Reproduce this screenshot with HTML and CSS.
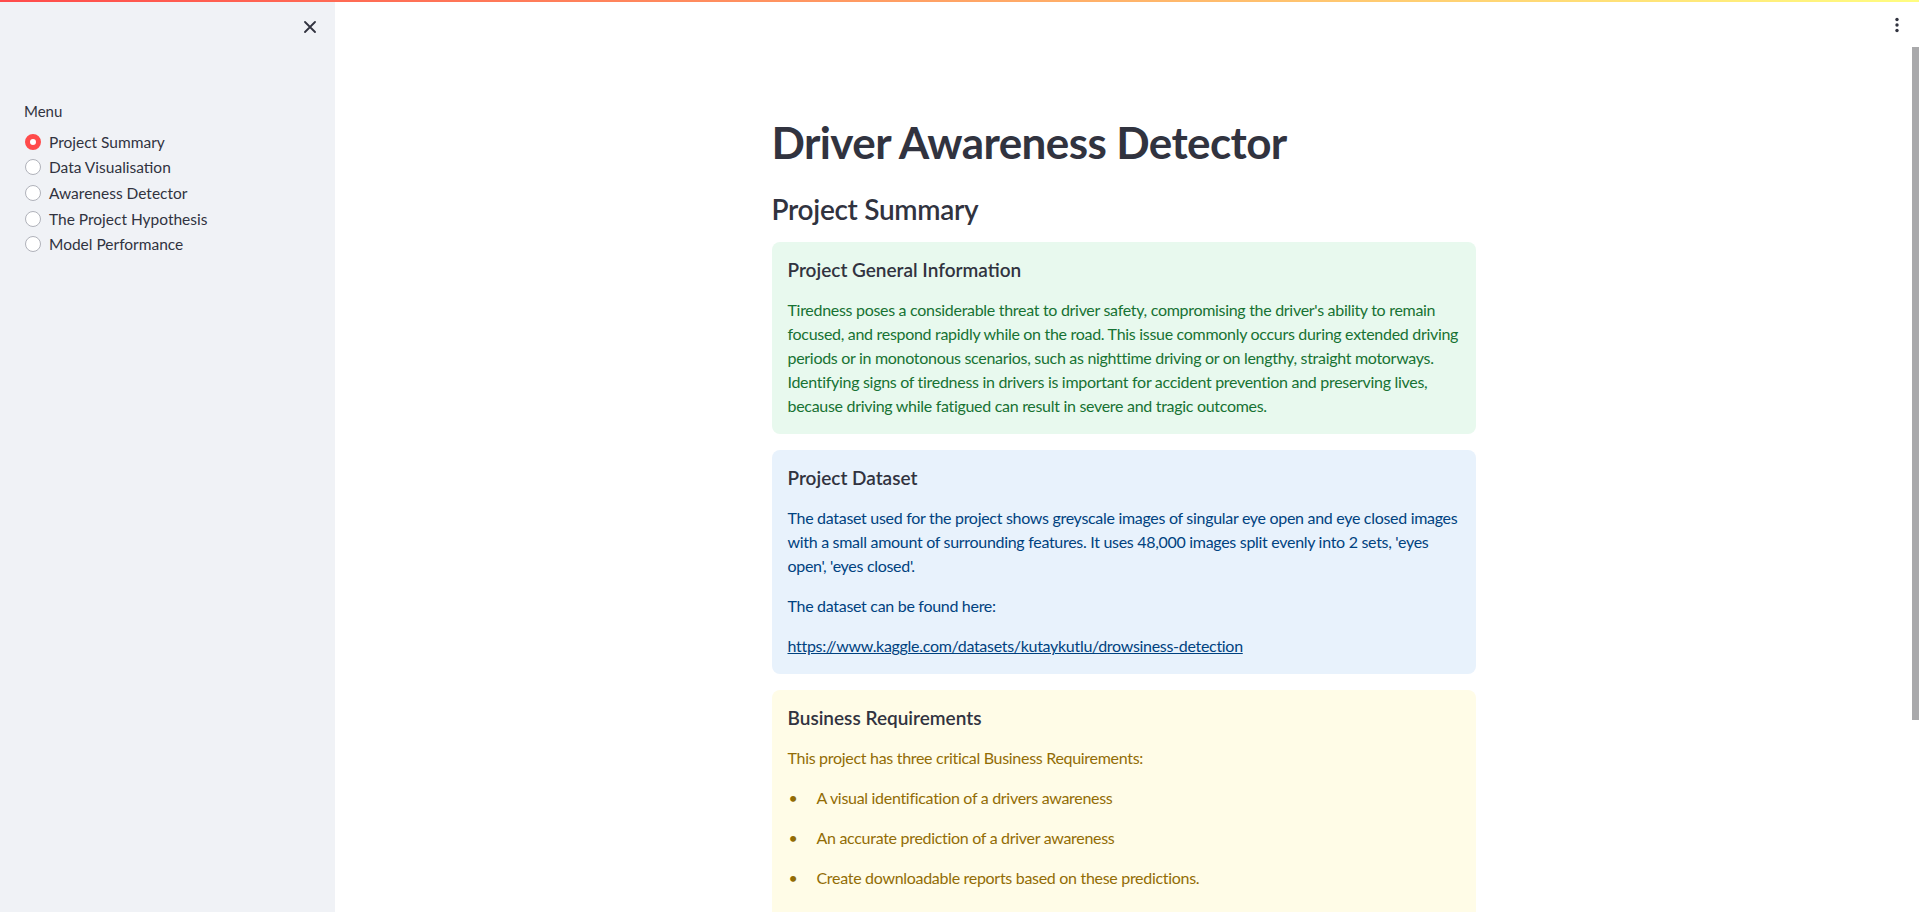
FILE: index.html
```html
<!DOCTYPE html>
<html lang="en">
<head>
<meta charset="utf-8">
<title>Driver Awareness Detector</title>
<link rel="stylesheet" href="styles.css">
</head>
<body>
<div class="decoration"></div>
<div class="app">
  <aside class="sidebar">
    <div class="sidebar-top">
      <button class="close-btn" aria-label="Close sidebar">
        <svg width="12" height="12" viewBox="0 0 12 12"><path d="M1 1 L11 11 M11 1 L1 11" stroke="#31333f" stroke-width="1.8" stroke-linecap="round" fill="none"/></svg>
      </button>
    </div>
    <div class="menu">
      <div class="menu-label">Menu</div>
      <div class="radio-group">
        <label class="radio selected"><span class="dot"></span><span class="radio-text">Project Summary</span></label>
        <label class="radio"><span class="dot"></span><span class="radio-text">Data Visualisation</span></label>
        <label class="radio"><span class="dot"></span><span class="radio-text">Awareness Detector</span></label>
        <label class="radio"><span class="dot"></span><span class="radio-text">The Project Hypothesis</span></label>
        <label class="radio"><span class="dot"></span><span class="radio-text">Model Performance</span></label>
      </div>
    </div>
  </aside>
  <main class="main">
    <div class="toolbar">
      <svg width="6" height="16" viewBox="0 0 6 16"><circle cx="3" cy="2.5" r="1.7" fill="#31333f"/><circle cx="3" cy="8" r="1.7" fill="#31333f"/><circle cx="3" cy="13.5" r="1.7" fill="#31333f"/></svg>
    </div>
    <div class="scroll-thumb"></div>
    <div class="block">
      <h1 class="title">Driver Awareness Detector</h1>
      <h3 class="subtitle">Project Summary</h3>
      <div class="alert success">
        <h4>Project General Information</h4>
        <p>Tiredness poses a considerable threat to driver safety, compromising the driver's ability to remain focused, and respond rapidly while on the road. This issue commonly occurs during extended driving periods or in monotonous scenarios, such as nighttime driving or on lengthy, straight motorways. Identifying signs of tiredness in drivers is important for accident prevention and preserving lives, because driving while fatigued can result in severe and tragic outcomes.</p>
      </div>
      <div class="alert info">
        <h4>Project Dataset</h4>
        <p>The dataset used for the project shows greyscale images of singular eye open and eye closed images with a small amount of surrounding features. It uses 48,000 images split evenly into 2 sets, 'eyes open', 'eyes closed'.</p>
        <p>The dataset can be found here:</p>
        <p><a href="#">https://www.kaggle.com/datasets/kutaykutlu/drowsiness-detection</a></p>
      </div>
      <div class="alert warning">
        <h4>Business Requirements</h4>
        <p>This project has three critical Business Requirements:</p>
        <ul>
          <li>A visual identification of a drivers awareness</li>
          <li>An accurate prediction of a driver awareness</li>
          <li>Create downloadable reports based on these predictions.</li>
        </ul>
      </div>
    </div>
  </main>
</div>
</body>
</html>
```
FILE: styles.css
```css
* { box-sizing: border-box; }
html, body {
  margin: 0;
  padding: 0;
  height: 100%;
  overflow: hidden;
  font-family: Lato, "Noto Sans", sans-serif;
  color: #31333f;
  background: #ffffff;
}
.decoration {
  position: fixed;
  top: 0;
  left: 0;
  right: 0;
  height: 2px;
  background: linear-gradient(90deg, #ff4b4b, #fffd80);
  z-index: 100;
}
.app {
  display: flex;
  height: 100vh;
}
.sidebar {
  width: 335px;
  flex: 0 0 335px;
  background: #f0f2f6;
  height: 100%;
}
.sidebar-top {
  display: flex;
  justify-content: flex-end;
  padding: 15px 13px 0 0;
}
.close-btn {
  width: 24px;
  height: 24px;
  border: none;
  background: transparent;
  padding: 0;
  display: flex;
  align-items: center;
  justify-content: center;
}
.menu {
  padding: 61px 24px 0 24px;
}
.menu-label {
  font-size: 15px;
  line-height: 22px;
  margin-bottom: 7px;
}
.radio-group {
  display: flex;
  flex-direction: column;
}
.radio {
  display: flex;
  align-items: center;
  height: 25.6px;
  font-size: 15.5px;
}
.dot {
  width: 16px;
  height: 16px;
  border-radius: 50%;
  border: 1px solid #b0b2ba;
  background: #ffffff;
  margin-left: 1px;
  margin-right: 8px;
  flex: none;
}
.radio.selected .dot {
  border: 5px solid #ff4b4b;
  background: #ffffff;
}
.main {
  flex: 1;
  height: 100%;
  overflow-y: auto;
  scrollbar-width: none;
  padding-right: 7px;
}
.main::-webkit-scrollbar { display: none; }
.scroll-thumb {
  position: fixed;
  top: 47px;
  right: 0;
  width: 7px;
  height: 673px;
  background: #a9a9ab;
}
.toolbar {
  position: fixed;
  top: 0;
  right: 0;
  height: 46px;
  display: flex;
  align-items: flex-start;
  padding: 17px 19px 0 0;
}
.block {
  max-width: 736px;
  margin: 0 auto;
  padding: 96px 16px 262px;
  display: flex;
  flex-direction: column;
  gap: 16px;
}
.title {
  margin: 0;
  padding: 20px 0 0;
  font-size: 44px;
  line-height: 52.8px;
  font-weight: 700;
  letter-spacing: -0.6px;
  color: #31333f;
}
.subtitle {
  margin: 0;
  padding: 8px 0 0;
  font-size: 28px;
  line-height: 33.6px;
  font-weight: 600;
  letter-spacing: -0.3px;
  color: #31333f;
}
.alert {
  border-radius: 8px;
  padding: 16px;
  font-size: 16px;
  line-height: 24px;
}
.alert h4 {
  margin: 0 0 16px;
  font-size: 19px;
  line-height: 24px;
  font-weight: 600;
  color: #31333f;
}
.alert p {
  margin: 0 0 16px;
  letter-spacing: -0.3px;
}
.alert p:last-child { margin-bottom: 0; }
.alert a { color: inherit; }
.success { background: #e8f9ee; color: #177233; }
.info { background: #e8f2fc; color: #004280; }
.warning { background: #fffce7; color: #926c05; }
.alert ul {
  list-style: none;
  margin: 0;
  padding: 0 0 24px;
}
.alert li {
  display: flex;
  margin-bottom: 16px;
  letter-spacing: -0.3px;
}
.alert li::before {
  content: "\2022";
  width: 28px;
  flex: none;
  padding-left: 1px;
}
```
